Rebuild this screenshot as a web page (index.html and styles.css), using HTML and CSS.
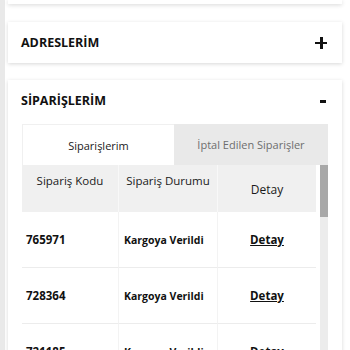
FILE: index.html
```html
<!DOCTYPE html>
<html lang="tr">
<head>
<meta charset="utf-8">
<title>Hesabım</title>
<link rel="stylesheet" href="styles.css">
</head>
<body>
<div class="page">
  <div class="card card-partial"></div>

  <div class="card">
    <div class="card-head">
      <span class="card-title">ADRESLERİM</span>
      <span class="icon-plus"></span>
    </div>
  </div>

  <div class="card">
    <div class="card-head">
      <span class="card-title">SİPARİŞLERİM</span>
      <span class="icon-minus"></span>
    </div>
    <div class="card-body">
      <div class="tabs">
        <div class="tab tab-active">Siparişlerim</div>
        <div class="tab">İptal Edilen Siparişler</div>
      </div>
      <div class="table-wrap">
        <table class="orders">
          <thead>
            <tr>
              <th class="th-top">Sipariş Kodu</th>
              <th class="th-top">Sipariş Durumu</th>
              <th class="th-mid">Detay</th>
            </tr>
          </thead>
          <tbody>
            <tr>
              <td class="code">765971</td>
              <td class="status">Kargoya Verildi</td>
              <td class="detail"><a href="#">Detay</a></td>
            </tr>
            <tr>
              <td class="code">728364</td>
              <td class="status">Kargoya Verildi</td>
              <td class="detail"><a href="#">Detay</a></td>
            </tr>
            <tr>
              <td class="code">721185</td>
              <td class="status">Kargoya Verildi</td>
              <td class="detail"><a href="#">Detay</a></td>
            </tr>
          </tbody>
        </table>
        <div class="scrollbar"><div class="thumb"></div></div>
      </div>
    </div>
  </div>
</div>
</body>
</html>
```
FILE: styles.css
```css
html, body {
  margin: 0;
  padding: 0;
  height: 350px;
  overflow: hidden;
  background: #ffffff;
}
body {
  font-family: "Open Sans", "Noto Sans", "DejaVu Sans", sans-serif;
  color: #1a1a1a;
}
.page {
  border-left: 5px solid #e9e9e9;
  padding: 0 8px 0 3px;
  display: flex;
  flex-direction: column;
  gap: 17px;
  height: 350px;
  box-sizing: border-box;
}
.card {
  background: #fff;
  box-shadow: 0 1px 4px rgba(0, 0, 0, 0.16);
  flex: none;
}
.card-partial {
  height: 4px;
  margin-bottom: 1px;
}
.card-head {
  height: 41px;
  display: flex;
  align-items: center;
  justify-content: space-between;
  padding: 0 15px 0 13px;
}
.card-title {
  font-weight: 700;
  font-size: 12.5px;
  color: #111;
}
.icon-plus {
  width: 12px;
  height: 12px;
  position: relative;
}
.icon-plus::before,
.icon-plus::after {
  content: "";
  position: absolute;
  background: #111;
}
.icon-plus::before {
  left: 0;
  right: 0;
  top: 5px;
  height: 2.5px;
}
.icon-plus::after {
  top: 0;
  bottom: 0;
  left: 5px;
  width: 2.5px;
}
.icon-minus {
  width: 6px;
  height: 3px;
  background: #111;
  margin-right: 1px;
  margin-top: 2px;
}
.card-body {
  padding: 3px 14px 0;
}
.tabs {
  display: flex;
  height: 41px;
}
.tab {
  flex: 1;
  display: flex;
  align-items: center;
  justify-content: center;
  font-size: 11px;
  color: #6e6e6e;
  background: #e9e9e9;
}
.tab-active {
  background: #fff;
  color: #1a1a1a;
  border-top: 1px solid #f0f0f0;
  border-left: 1px solid #f0f0f0;
  flex: 0 0 152px;
  box-sizing: border-box;
}
.table-wrap {
  display: flex;
  align-items: flex-start;
  gap: 4px;
  height: 300px;
}
.orders {
  width: 294px;
  border-collapse: separate;
  border-spacing: 0;
  table-layout: fixed;
}
.orders th {
  background: #f0f0f0;
  height: 47px;
  font-weight: 400;
  font-size: 11.5px;
  color: #1a1a1a;
  text-align: center;
  padding: 0;
  border-right: 1px solid #f8f8f8;
  box-sizing: border-box;
}
.orders th:last-child {
  border-right: 0;
}
.orders th:nth-child(1) { width: 97px; }
.orders th:nth-child(2) { width: 99px; }
.orders th.th-top {
  vertical-align: top;
  padding-top: 8px;
}
.orders th.th-mid {
  vertical-align: middle;
  padding-top: 2px;
  font-size: 12px;
}
.orders td {
  height: 55px;
  font-size: 10.5px;
  font-weight: 700;
  color: #111;
  border-bottom: 1px solid #ececec;
  border-right: 1px solid #f3f3f3;
  padding: 0;
  vertical-align: middle;
}
.orders td:last-child {
  border-right: 0;
}
.orders td.code {
  padding-left: 4px;
  font-size: 11.5px;
}
.orders td.status {
  padding-left: 5px;
}
.orders td.detail {
  text-align: center;
}
.orders td.detail a {
  color: #111;
  text-decoration: underline;
  font-size: 11.5px;
}
.scrollbar {
  width: 8px;
  height: 300px;
  background: #ececec;
  flex: none;
}
.thumb {
  height: 52px;
  background: #a8a8a8;
}
```
